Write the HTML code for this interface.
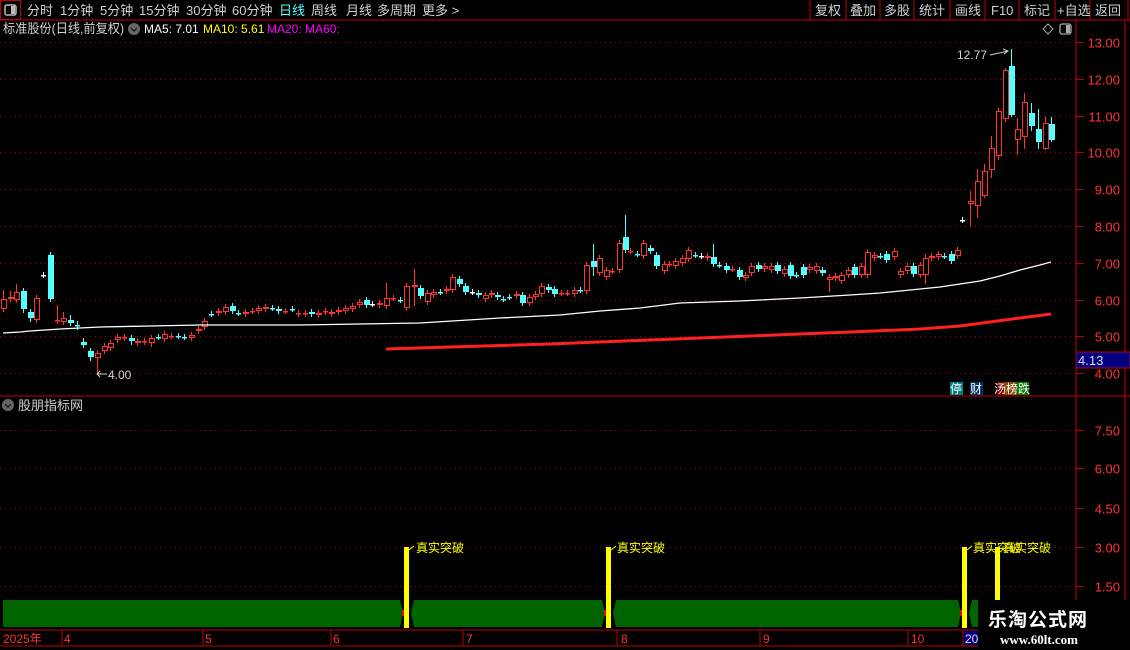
<!DOCTYPE html>
<html><head><meta charset="utf-8">
<style>
body{margin:0;background:#000;width:1130px;height:650px;overflow:hidden;font-family:"Liberation Sans","Noto Sans CJK SC",sans-serif;}
#wrap{position:relative;width:1130px;height:650px;}
</style></head><body><div id="wrap">
<svg id="s" width="1130" height="650" style="position:absolute;left:0;top:0" font-family="Liberation Sans, Noto Sans CJK SC, sans-serif">
<line x1="0" y1="20" x2="1130" y2="20" stroke="#c00000" stroke-width="1"/>
<rect x="0.5" y="0.5" width="20" height="19" fill="none" stroke="#c00000"/>
<rect x="5" y="5" width="11" height="10" rx="2" fill="none" stroke="#bbb" stroke-width="1.5"/>
<rect x="11" y="6" width="4" height="8" fill="#bbb"/>
<g font-size="13" fill="#d0d0d0">
<text x="27" y="15">分时</text><text x="60" y="15">1分钟</text><text x="100" y="15">5分钟</text><text x="139" y="15">15分钟</text><text x="186" y="15">30分钟</text><text x="232" y="15">60分钟</text>
<text x="279" y="15" fill="#54ffff">日线</text><text x="311" y="15">周线</text><text x="346" y="15">月线</text><text x="377" y="15">多周期</text><text x="422" y="15">更多 &gt;</text>
</g>
<g stroke="#c00000"><line x1="810" y1="0" x2="810" y2="20"/><line x1="846" y1="0" x2="846" y2="20"/><line x1="880" y1="0" x2="880" y2="20"/><line x1="914" y1="0" x2="914" y2="20"/><line x1="950" y1="0" x2="950" y2="20"/><line x1="985" y1="0" x2="985" y2="20"/><line x1="1019" y1="0" x2="1019" y2="20"/><line x1="1055" y1="0" x2="1055" y2="20"/><line x1="1090" y1="0" x2="1090" y2="20"/><line x1="1128" y1="0" x2="1128" y2="20"/></g>
<g font-size="13" fill="#d0d0d0"><text x="815" y="15">复权</text><text x="850" y="15">叠加</text><text x="884" y="15">多股</text><text x="919" y="15">统计</text><text x="955" y="15">画线</text><text x="991" y="15">F10</text><text x="1024" y="15">标记</text><text x="1057" y="15">+自选</text><text x="1095" y="15">返回</text></g>
<text x="3" y="33" font-size="13" fill="#d0d0d0" textLength="121" lengthAdjust="spacingAndGlyphs">标准股份(日线,前复权)</text>
<circle cx="134" cy="29" r="6" fill="#666"/><path d="M131 28l3 3 3-3" stroke="#111" fill="none" stroke-width="1.2"/>
<text x="144" y="33" font-size="12" fill="#fff">MA5: 7.01</text>
<text x="203" y="33" font-size="12" fill="#ffff00">MA10: 5.61</text>
<text x="267" y="33" font-size="12" fill="#ff00ff">MA20:  MA60:</text>
<path d="M1048 24l5 5-5 5-5-5z" fill="none" stroke="#aaa"/>
<rect x="1060" y="24" width="11" height="10" rx="2" fill="none" stroke="#aaa" stroke-width="1.3"/><rect x="1066" y="25" width="4" height="8" fill="#aaa"/>
<line x1="1076" y1="20" x2="1076" y2="650" stroke="#c00000"/>
<line x1="1125" y1="20" x2="1125" y2="600" stroke="#c00000"/>
<line x1="0" y1="396" x2="1130" y2="396" stroke="#c00000"/>
<g id="grid"></g>
<g id="cand"></g>
<polyline fill="none" stroke="#fff" stroke-width="1.3" points="3,333 20,332 30,331 60,329 100,327 150,326 200,325 300,325 420,323 500,318 560,315 600,311 640,308 680,303 740,301 800,298 850,295 880,293 910,290 940,287 960,284 980,281 1000,276 1020,270 1040,265 1051,262"/>
<polyline fill="none" stroke="#ff2020" stroke-width="3" points="386,349 450,347 550,344 650,340 750,336 850,332 920,329 960,326 990,322 1020,318 1051,314"/>
<text x="957" y="59" font-size="12" fill="#d0d0d0">12.77</text><path d="M990 55l18-4M1003 49l5 2-4 3" stroke="#d0d0d0" fill="none"/>
<text x="108" y="379" font-size="12" fill="#d0d0d0">4.00</text><path d="M97 374h10M100 371l-3 3 3 3" stroke="#d0d0d0" fill="none"/>
<g font-size="13" fill="#ff3232" text-anchor="end" id="plab"></g>
<rect x="1076" y="352" width="54" height="16" fill="#000080" stroke="#c00000"/>
<text x="1078" y="365" font-size="13" fill="#ddd">4.13</text>
<g font-size="12"><rect x="950" y="382" width="13" height="13" fill="#008080"/><text x="950" y="393" fill="#fff">停</text>
<rect x="970" y="382" width="13" height="13" fill="#003366"/><text x="970" y="393" fill="#fff">财</text>
<rect x="997" y="382" width="7" height="13" fill="#800000"/><rect x="1004" y="382" width="12" height="13" fill="#8b4500"/><rect x="1016" y="382" width="13" height="13" fill="#007700"/>
<text x="994" y="393" fill="#fff">汤榜跌</text></g>
<circle cx="8" cy="405" r="6" fill="#666"/><path d="M5 404l3 3 3-3" stroke="#111" fill="none" stroke-width="1.2"/>
<text x="18" y="410" font-size="13" fill="#d0d0d0">股朋指标网</text>
<rect x="3" y="600" width="1067" height="27" fill="#006400"/>
<g fill="#000"><path d="M400 600h14l-3 13 3 14h-14l3-14z"/><path d="M602 600h14l-3 13 3 14h-14l3-14z"/><path d="M958 600h14l-3 13 3 14h-14l3-14z"/></g>
<g fill="#ff0000"><rect x="402" y="610" width="3" height="6"/><rect x="604" y="610" width="3" height="6"/><rect x="960" y="610" width="3" height="6"/></g>
<g fill="#ffff00"><rect x="404" y="547" width="5" height="81"/><rect x="606" y="547" width="5" height="81"/><rect x="962" y="547" width="5" height="81"/><rect x="995" y="547" width="5" height="53"/></g>
<g font-size="12" fill="#ffff00"><text x="416" y="552">真实突破</text><text x="617" y="552">真实突破</text><text x="973" y="552">真实突破</text><text x="1003" y="552">真实突破</text></g>
<path d="M409 550l5-4M611 550l5-4M967 550l5-4" stroke="#ffff00"/>
<line x1="0" y1="630" x2="1076" y2="630" stroke="#c00000"/>
<line x1="0" y1="646" x2="1076" y2="646" stroke="#c00000"/>
<g stroke="#c00000"><line x1="62" y1="630" x2="62" y2="646"/><line x1="203" y1="630" x2="203" y2="646"/><line x1="331" y1="630" x2="331" y2="646"/><line x1="463" y1="630" x2="463" y2="646"/><line x1="617" y1="630" x2="617" y2="646"/><line x1="760" y1="630" x2="760" y2="646"/><line x1="908" y1="630" x2="908" y2="646"/><line x1="963" y1="630" x2="963" y2="646"/></g>
<g font-size="12" fill="#ff3232"><text x="3" y="643">2025年</text><text x="64" y="643">4</text><text x="205" y="643">5</text><text x="333" y="643">6</text><text x="466" y="643">7</text><text x="621" y="643">8</text><text x="763" y="643">9</text><text x="911" y="643">10</text></g>
<rect x="964" y="631" width="14" height="14" fill="#000080"/><text x="965" y="643" font-size="12" fill="#ddd">20</text>
<rect x="978" y="600" width="152" height="50" fill="#000"/>
<text x="988" y="626" font-size="19" font-weight="bold" fill="#fff" letter-spacing="1">乐淘公式网</text>
<text x="1000" y="644" font-size="13" font-weight="bold" fill="#fff" font-family="Liberation Serif, serif">www.60lt.com</text>
</svg>
<script>
var NS="http://www.w3.org/2000/svg";
function el(p,t,a){var e=document.createElementNS(NS,t);for(var k in a)e.setAttribute(k,a[k]);p.appendChild(e);return e;}
var g=document.getElementById('grid'),pl=document.getElementById('plab');
for(var p=4;p<=13;p++){var y=Math.round(42+(13-p)*36.8)+.5;
 el(g,'line',{x1:0,y1:y,x2:1076,y2:y,stroke:'#b00000','stroke-dasharray':'1,4'});
 el(g,'line',{x1:1076,y1:y,x2:1084,y2:y,stroke:'#c00000'});
 var t=el(pl,'text',{x:1120,y:y+5});t.textContent=p.toFixed(2);}
[[430,'7.50'],[468,'6.00'],[508,'4.50'],[547,'3.00'],[586,'1.50']].forEach(function(a){var y=a[0]+.5;
 el(g,'line',{x1:0,y1:y,x2:1076,y2:y,stroke:'#b00000','stroke-dasharray':'1,4'});
 el(g,'line',{x1:1076,y1:y,x2:1084,y2:y,stroke:'#c00000'});
 var t=el(pl,'text',{x:1120,y:y+5});t.textContent=a[1];});
var c=document.getElementById('cand');
var R='#ff3232',C='#54ffff',W='#ffffff';
var A=[[3,'r',299,309,290],[10,'r',297,299,291],[16,'r',292,300,284],[23,'c',291,309,0,313],[30,'c',312,318,0,322],[36,'r',298,320],[43,'w',275,275],[50,'c',255,299],
[57,'r',320,321,305],[63,'r',318,322,312],[70,'c',320,323,315],[77,'x',325,325,321,330],[83,'c',342,345,338],[90,'c',351,357,0,361],[97,'r',353,358,0,373],[104,'r',346,351],[110,'r',343,348],[117,'r',337,340],[124,'r',337,338],[131,'c',338,341,0,345],[137,'r',341,343],[144,'r',341,342],[151,'r',338,343,0,347],[158,'x',337,337],[164,'r',334,339],[171,'x',336,336],[178,'x',336,336],[184,'x',337,337],[191,'r',335,338],[198,'r',329,331],[204,'r',321,327],[211,'x',314,314],[218,'r',311,313],[225,'r',307,312],[232,'c',306,311],[238,'x',313,313],[245,'r',312,314],[252,'x',311,311],[258,'r',308,311],[265,'r',307,309],[272,'x',308,308],[278,'c',309,311],[285,'x',311,311],[292,'x',309,309],[298,'r',313,314],[305,'r',313,314],[311,'c',312,314],[318,'r',313,315],[325,'r',311,312],[331,'r',312,314],[338,'r',310,312],[345,'r',308,311],[352,'r',306,309],[359,'r',302,305],[366,'c',300,305],[372,'w',304,304],[379,'r',303,305],[386,'r',298,306,283],[393,'x',298,298],[400,'x',300,300]];
var B=[[406,'r',280,301],[413,'r',279,281,264,299],[419,'c',282,290],[425,'r',287,295],[431,'r',286,289],[437,'x',286,286],[443,'r',283,285],[449,'r',272,284],[455,'c',274,278],[461,'c',280,286],[467,'w',286,286],[473,'c',287,289],[479,'r',289,292],[485,'r',287,289],[491,'c',289,291],[496,'x',292,292],[502,'x',291,291],[508,'r',288,290],[514,'c',289,296],[520,'r',291,296],[526,'r',288,291],[532,'r',280,288],[538,'c',281,284],[544,'c',283,288],[550,'x',287,287],[556,'x',287,287],[562,'r',284,288],[568,'x',284,284],[574,'r',261,285],[580,'c',257,263,241,271],[586,'r',254,268],[592,'r',265,272],[598,'x',266,266],[604,'r',240,265],[610,'c',235,247,214],[615,'x',248,248],[621,'x',250,250],[627,'r',240,252],[633,'c',245,248],[639,'c',251,262],[646,'r',260,266],[651,'x',260,260],[657,'r',257,262],[663,'r',254,259],[669,'r',247,255],[675,'x',251,251],[681,'w',252,252],[687,'r',252,254],[692,'c',253,260,241],[698,'x',261,261],[704,'c',262,265],[710,'x',264,264],[716,'c',265,272],[722,'r',270,273],[728,'r',262,268],[734,'c',261,264],[740,'r',262,264],[746,'r',262,265],[752,'c',261,266],[758,'r',264,269],[764,'c',261,271],[770,'x',270,270],[776,'c',263,270],[782,'r',263,265],[788,'r',262,266],[794,'c',265,268],[800,'r',272,275,0,286],[806,'r',271,273],[812,'r',270,276],[818,'r',265,270],[824,'c',263,270],[830,'r',262,270],[836,'r',249,270],[842,'r',251,254],[848,'x',252,252],[854,'c',250,256],[861,'r',248,253],[867,'r',266,270],[873,'r',262,266],[879,'c',262,269],[885,'r',261,270],[890,'r',254,270,250,278],[896,'r',252,254],[902,'r',250,253],[908,'x',252,252],[914,'c',250,257],[920,'r',247,252]];
B.forEach(function(b){b[0]=Math.round(400+(b[0]-400)*1.0714);for(var i=2;i<6;i++)if(b[i])b[i]=Math.round(200+(b[i]-200)*1.0714);});
var E=[[962,'w',220,220],[970,'r',201,204,191,227],[977,'r',181,206,169,218],[984,'r',171,196,164,198],[991,'r',148,170,136,178],[998,'r',111,156,108,160],[1005,'r',70,119,68,122],[1011,'c',66,115,49,117],[1017,'r',129,140,118,155],[1024,'r',102,137,93,149],[1031,'c',113,126,103,131],[1038,'c',129,142,109,149],[1045,'r',123,149,117,150],[1051,'c',124,140,117,142]];
A.concat(B,E).forEach(function(d){var x=d[0],tp=d[1],t=d[2],b=d[3],h=d[4]||t-3,l=d[5]||b+3;
 var col=tp=='r'?R:tp=='c'?C:tp=='w'?W:((x%3)?C:R);
 el(c,'line',{x1:x+.5,y1:h,x2:x+.5,y2:l,stroke:col});
 if(b-t<2){el(c,'rect',{x:x-2,y:t,width:5,height:1.5,fill:col});}
 else if(tp=='r'){el(c,'rect',{x:x-2+.5,y:t+.5,width:5,height:b-t-1,fill:'#000',stroke:col});}
 else el(c,'rect',{x:x-2,y:t,width:6,height:b-t,fill:col});});
</script>
</div></body></html>
